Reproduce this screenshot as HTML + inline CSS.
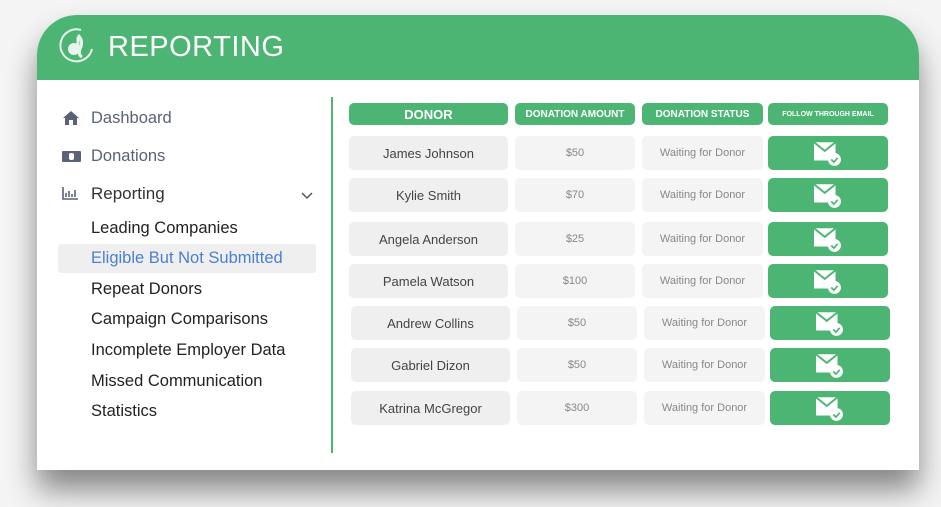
<!DOCTYPE html><html><head><style>
*{margin:0;padding:0;box-sizing:border-box}
body{width:941px;height:507px;background:#f4f4f4;position:relative;overflow:hidden;font-family:"Liberation Sans",sans-serif}
.card{position:absolute;left:37px;top:15px;width:882px;height:455px;background:#fff;border-radius:40px 40px 0 0;box-shadow:0 20px 30px rgba(0,0,0,.45);overflow:hidden}
.hdr{height:65px;background:#4db574;position:relative}
.hdr .t{position:absolute;left:71px;top:16px;color:#fff;font-size:29px;letter-spacing:.5px}
.nav{position:absolute;left:91px;color:#5a6278;font-size:16.5px}
.sub{position:absolute;left:91px;color:#222;font-size:16.5px}
.vl{position:absolute;left:331px;top:97px;width:2px;height:356px;background:#4db574}
.c{position:absolute;border-radius:5px;display:flex;align-items:center;justify-content:center;font-family:"Liberation Sans Narrow","Liberation Sans",sans-serif}
.h{background:#4db574;color:#fff;font-weight:bold;font-size:10px}
.n{background:#efefef;color:#444;font-size:13px}
.a{background:#f4f4f4;color:#888;font-size:11px}
.g{background:#4db574}
</style></head><body>
<div class="card">
<div class="hdr">
<svg style="position:absolute;left:22px;top:12px" width="36" height="38" viewBox="0 0 36 38"><path d="M22 3 A16 16 0 1 0 33 22" fill="none" stroke="#e8f5ec" stroke-width="2"/><circle cx="15" cy="22" r="6" fill="#e8f5ec"/><path d="M19 8 Q25 14 21 22 Q19 28 23 30 M19 22 L19 10" fill="none" stroke="#e8f5ec" stroke-width="3"/></svg>
<div class="t">REPORTING</div>
</div>
</div>
<svg style="position:absolute;left:62px;top:110px" width="18" height="16" viewBox="0 0 18 16"><path d="M9 1 L1 8 H3 V15 H7 V10 H11 V15 H15 V8 H17 Z" fill="#5a6278"/></svg>
<div class="nav" style="top:109px">Dashboard</div>
<div style="position:absolute;left:62px;top:151px;width:19px;height:11px;background:#5a6278;border-radius:1px"><div style="position:absolute;left:7px;top:2px;width:5px;height:7px;background:#fff;border-radius:2px"></div></div>
<div class="nav" style="top:147px">Donations</div>
<svg style="position:absolute;left:62px;top:187px" width="16" height="13"><path d="M1 0V12H16M4 6V10M7 4V10M10 7V10M13 3V10" stroke="#5a6278" stroke-width="1.6" fill="none"/></svg>
<div class="sub" style="top:184px;color:#333;font-size:17px">Reporting</div>
<svg style="position:absolute;left:301px;top:192px" width="12" height="8"><path d="M1 1L6 6L11 1" stroke="#555" stroke-width="1.5" fill="none"/></svg>
<div class="sub" style="top:219px">Leading Companies</div>
<div style="position:absolute;left:58px;top:244px;width:258px;height:29px;background:#efefef;border-radius:3px"></div>
<div class="sub" style="top:249px;color:#4a7fd0">Eligible But Not Submitted</div>
<div class="sub" style="top:280px">Repeat Donors</div>
<div class="sub" style="top:310px">Campaign Comparisons</div>
<div class="sub" style="top:341px">Incomplete Employer Data</div>
<div class="sub" style="top:372px">Missed Communication</div>
<div class="sub" style="top:402px">Statistics</div>
<div class="vl"></div>
<div class="c h" style="left:349px;top:103px;width:159px;height:22px;font-size:13px">DONOR</div>
<div class="c h" style="left:515px;top:103px;width:120px;height:22px">DONATION AMOUNT</div>
<div class="c h" style="left:642px;top:103px;width:121px;height:22px">DONATION STATUS</div>
<div class="c h" style="left:768px;top:103px;width:120px;height:22px;font-size:7px">FOLLOW THROUGH EMAIL</div>
<div id="rows"></div>
<script>
var d=[["James Johnson","$50",136,0],["Kylie Smith","$70",178,0],["Angela Anderson","$25",222,0],["Pamela Watson","$100",264,0],["Andrew Collins","$50",306,2],["Gabriel Dizon","$50",348,2],["Katrina McGregor","$300",391,2]];
var h="";d.forEach(function(r){var y=r[2],o=r[3];
h+='<div class="c n" style="left:'+(349+o)+'px;top:'+y+'px;width:159px;height:34px">'+r[0]+'</div>';
h+='<div class="c a" style="left:'+(515+o)+'px;top:'+y+'px;width:120px;height:34px">'+r[1]+'</div>';
h+='<div class="c a" style="left:'+(642+o)+'px;top:'+y+'px;width:121px;height:34px">Waiting for Donor</div>';
h+='<div class="c g" style="left:'+(768+o)+'px;top:'+y+'px;width:120px;height:34px"><svg width="28" height="26" viewBox="0 0 26 24"><path d="M0 2H20V12A7 7 0 0 0 13 19H0Z" fill="#fff"/><path d="M0 2L10 10L20 2" stroke="#4db574" stroke-width="1.8" fill="none"/><circle cx="19" cy="18" r="6" fill="#fff"/><path d="M16 18L18.5 20.5L22 16.5" stroke="#4db574" stroke-width="1.6" fill="none"/></svg></div>';});
document.getElementById("rows").innerHTML=h;
</script>
</body></html>
